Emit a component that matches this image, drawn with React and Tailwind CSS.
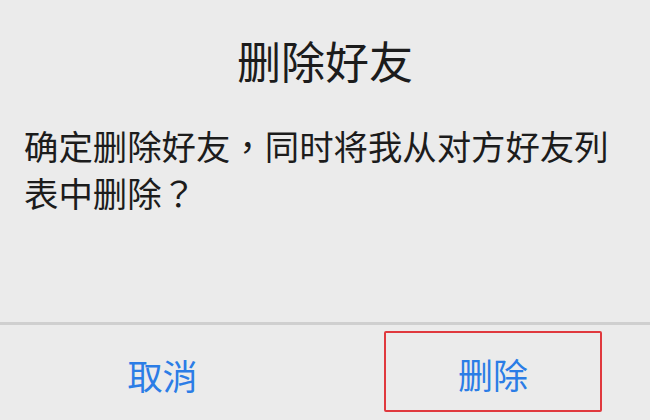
export default function App() {
  const font = { fontFamily: '"Noto Sans CJK TC", "Noto Sans CJK SC", sans-serif' }

  return (
    <div className="w-[650px] h-[420px] bg-[#ebebeb] flex flex-col overflow-hidden" style={font}>
      <div className="pt-[32px] text-center text-[44px] leading-[56px] text-[#1c1c1c]">
        删除好友
      </div>

      <p className="mt-[34px] px-[24px] text-[34.4px] leading-[47px] text-[#1c1c1c]">
        确定删除好友，同时将我从对方好友列表中删除？
      </p>

      <div className="mt-auto h-[3px] bg-[#cfcfcf]" />

      <div className="grid grid-cols-2 h-[95px]">
        <button className="flex items-center justify-center text-[35px] text-[#2b7de6] pt-[6px]">
          取消
        </button>
        <div className="flex items-start pt-[6px]">
          <button className="ml-[59px] w-[218px] h-[81px] border-2 border-[#e0393e] rounded-[2px] flex items-center justify-center text-[35px] text-[#2b7de6] pt-[6px]">
            删除
          </button>
        </div>
      </div>
    </div>
  )
}
